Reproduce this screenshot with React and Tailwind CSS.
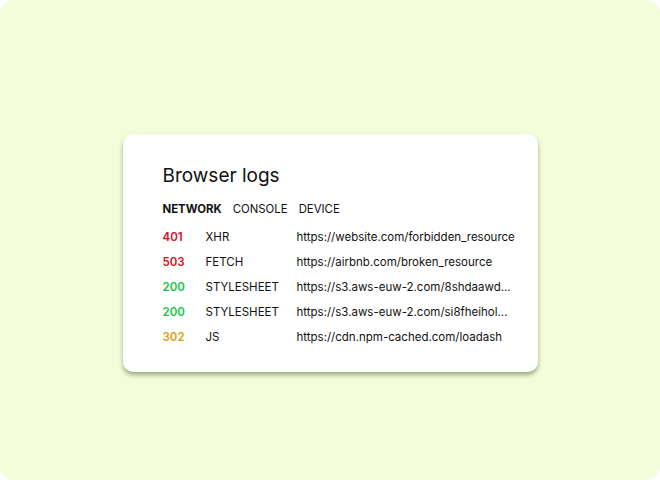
const logs = [
  { code: "401", color: "text-[#d4101e]", type: "XHR", url: "https://website.com/forbidden_resource" },
  { code: "503", color: "text-[#d4101e]", type: "FETCH", url: "https://airbnb.com/broken_resource" },
  { code: "200", color: "text-[#1bc446]", type: "STYLESHEET", url: "https://s3.aws-euw-2.com/8shdaawd..." },
  { code: "200", color: "text-[#1bc446]", type: "STYLESHEET", url: "https://s3.aws-euw-2.com/si8fheihol..." },
  { code: "302", color: "text-[#d3a11a]", type: "JS", url: "https://cdn.npm-cached.com/loadash" },
];

export default function App() {
  return (
    <div className="w-[660px] h-[480px] bg-white font-['Inter',sans-serif]">
      <div className="w-full h-full rounded-[14px] bg-[#f3fdd9] flex flex-col items-center pt-[134px]">
        <div className="w-[415px] h-[238px] bg-white rounded-[10px] shadow-[0_3px_4px_rgba(90,100,60,0.55)] pl-[40px] pt-[29px]">
          <h1 className="text-[19px] leading-[26px] text-[#111]">Browser logs</h1>
          <div className="flex gap-[11px] mt-[12px] text-[11.4px] leading-[16px] text-[#111]">
            <span className="font-bold">NETWORK</span>
            <span>CONSOLE</span>
            <span>DEVICE</span>
          </div>
          <div className="mt-[12px] flex flex-col gap-[9px] text-[11.5px] leading-[16px] text-[#111]">
            {logs.map((l, i) => (
              <div key={i} className="flex">
                <span className={`w-[43px] font-semibold ${l.color}`}>{l.code}</span>
                <span className="w-[91px]">{l.type}</span>
                <span>{l.url}</span>
              </div>
            ))}
          </div>
        </div>
      </div>
    </div>
  );
}
